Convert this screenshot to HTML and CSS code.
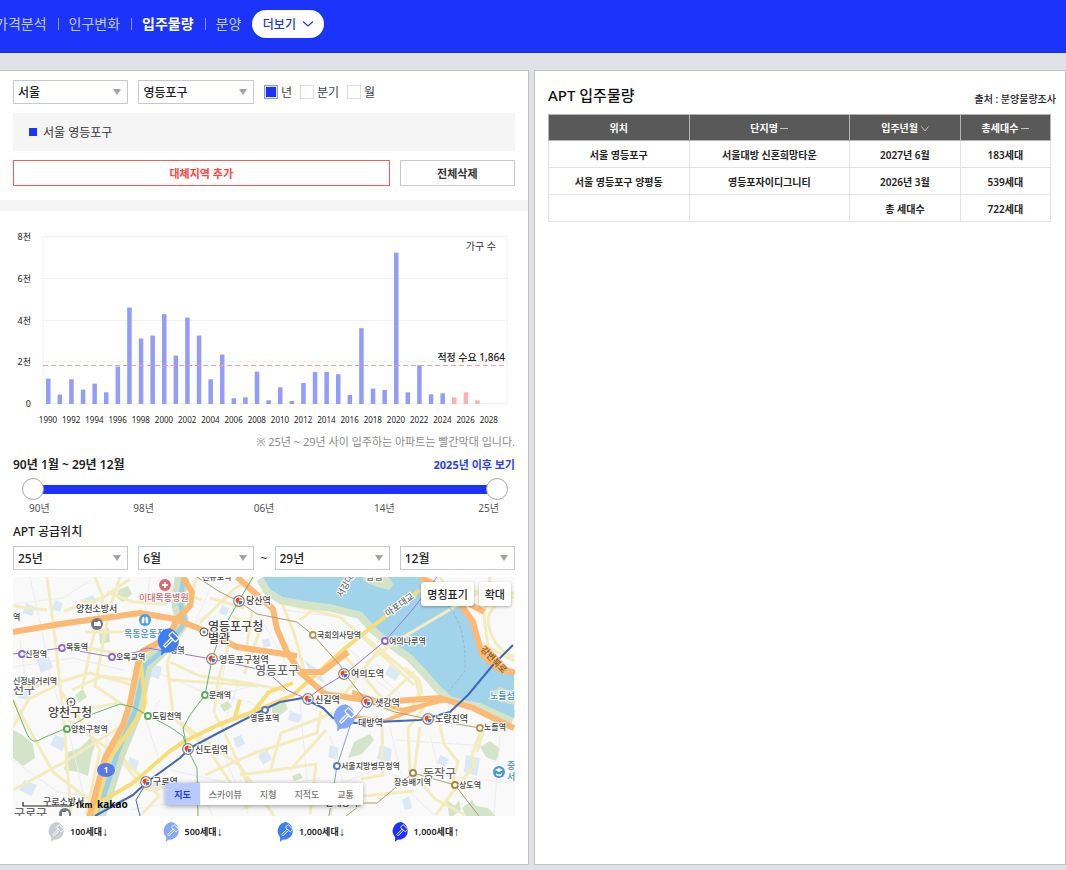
FILE: index.html
```html
<!DOCTYPE html>
<html lang="ko">
<head>
  <meta charset="UTF-8" />
  <meta name="viewport" content="width=device-width, initial-scale=1.0"/>
  <title>입주물량</title>
  <link rel="stylesheet" href="styles.css">
</head>
<body>
  <svg class="defs" aria-hidden="true">
    <symbol id="pin" viewBox="0 0 20 22">
      <path d="M10 0a10 10 0 0 1 0 19.4q-2 0-4 .2L3.200 22l.4-5A10 10 0 0 1 10 0z" fill="currentColor"/>
      <g fill="none" stroke="#fff" stroke-width="1" transform="rotate(45 10 10)">
        <rect x="6.500" y="3.200" width="7.500" height="4.200" rx=".6"/>
        <path d="M9.300 7.400h2v8.600h-2z"/>
      </g>
    </symbol>
    <symbol id="transfer" viewBox="0 0 12 12">
      <circle cx="6" cy="6" r="5.300" fill="#fff" stroke="#858585" stroke-width="1.200"/>
      <path d="M6 2.500a3.500 3.500 0 0 1 3.500 2L6 6z" fill="#e8a33c"/>
      <path d="M2.500 6A3.500 3.500 0 0 1 6 2.500V6z" fill="#e0483f"/>
      <path d="M2.500 6L5 9.400 6 6z" fill="#e0483f"/>
      <path d="M6 9.500A3.500 3.500 0 0 0 9.500 6H6z" fill="#3f74d8"/>
    </symbol>
  </svg>

  <header class="topbar">
    <nav class="menu">
      <a href="#">가격분석</a>
      <a href="#">인구변화</a>
      <a href="#" class="active">입주물량</a>
      <a href="#">분양</a>
    </nav>
    <button type="button" class="more">더보기
      <svg width="12" height="8" viewBox="0 0 12 8"><path d="M1 1.500l5 4.500 5-4.500" fill="none" stroke="currentColor" stroke-width="1.200"/></svg>
    </button>
  </header>

  <main class="panels">
    <section class="panel panel-left">
      <div class="filters">
        <div class="row">
          <select class="region" aria-label="시도"><option>서울</option></select>
          <select class="region" aria-label="시군구"><option>영등포구</option></select>
          <div class="checks">
            <label><input type="checkbox" checked>년</label>
            <label><input type="checkbox">분기</label>
            <label><input type="checkbox">월</label>
          </div>
        </div>
        <div class="selected">서울 영등포구</div>
        <div class="row">
          <button type="button" class="btn-add">대체지역 추가</button>
          <button type="button" class="btn-clear">전체삭제</button>
        </div>
      </div>

      <div class="supply">
        <svg class="chart" viewBox="0 0 502 200" role="img" aria-label="연도별 입주물량">
          <g id="grid"></g>
          <g id="bars"></g>
          <line class="demand" x1="30" y1="139.500" x2="494" y2="139.500"/>
          <text class="unit" x="483" y="24">가구 수</text>
          <text class="demand-label" x="492" y="135">적정 수요 1,864</text>
          <g id="years"></g>
        </svg>
        <p class="note">※ 25년 ~ 29년 사이 입주하는 아파트는 빨간막대 입니다.</p>
        <div class="period">
          <strong>90년 1월 ~ 29년 12월</strong>
          <a href="#">2025년 이후 보기</a>
        </div>
        <div class="slider">
          <input type="range" min="1990" max="2025" value="1990" aria-label="시작 연도">
          <input type="range" min="1990" max="2025" value="2025" aria-label="종료 연도">
        </div>
        <div class="ticks"><span>90년</span><span>98년</span><span>06년</span><span>14년</span><span>25년</span></div>

        <h2>APT 공급위치</h2>
        <div class="range">
          <select aria-label="시작 년"><option>25년</option></select>
          <select aria-label="시작 월"><option>6월</option></select>
          <span>~</span>
          <select aria-label="종료 년"><option>29년</option></select>
          <select aria-label="종료 월"><option>12월</option></select>
        </div>

        <div class="map">
          <svg viewBox="13 577 502 239">
            <rect x="13" y="577" width="502" height="239" fill="#f9f9f9"/>

            <!-- parks and blocks -->
            <g fill="#d3e4c8">
              <path d="M118 590l10-4 4 8-9 8-6-4zM99 630l10-2 1 14-10 2zM13 730l8 4 12 10 2 14-12 8-10-8zM68 752l12-4 10-10 6 4-4 12-4 22-10-4-14-2zM75 695l8-6 4 8-8 6zM272 702l12-3 4 10-10 8-6-4zM354 742l16-8 4 6-12 14-14 4zM480 747l10-6 10 8-4 12-10-4zM462 808l10-8 4 6 12 2 8 8h-30zM292 776l8-3 3 5-9 3zM447 800l8 6 4-6 2 10-8 6h-4zM220 705l8-4 4 6-8 5z"/>
            </g>
            <g fill="#dbe9f5">
              <path d="M26 603l10 4-4 9-9-3zM83 599l10-4 4 8-10 5zM36 660l12-5 5 12-12 6zM150 664l12 3-3 12-11-3zM20 688l11 3-3 9-10-2zM55 735l12 4-5 12-12-6zM24 780l13 5-6 11-12-6zM130 757l9 4-3 10-10-4zM233 738l8-3 4 9-8 4zM258 755l9-5 5 9-9 6zM304 660l14 10 7 13-12-6zM290 711l12 4-3 8-11-3zM380 745l12 4-2 14-13-4zM402 800l7-4 3 12-7 2zM440 755l9 4-4 8-8-4zM390 665l12 6-7 10-10-7zM466 755l14 3-3 18-13-4zM222 605l7 3-3 8-7-3zM262 640l7-2 2 8-8 2zM330 745l9 3-2 12-9-3zM55 600l8 3-3 9-8-3zM495 590l10 3-2 9-11-3zM150 785l9-5 4 8-8 5z"/>
            </g>

            <!-- minor streets -->
            <g class="street minor">
              <path d="M13 604l50-6 28-18M30 577l12 54 8 45 20 60 18 78M13 667l60-9 50 12M13 760l45 32 50 8M150 577l-5 34M195 690l55 12 26 20M170 770l90 20 60-12M230 640l-10 50M215 577l-20 46M250 600l40 70M300 700l10 115M330 735l22 80M390 727l14 60 30 28M430 735l10 40 70 8M500 735l-6 80M350 650l50 44M370 632l35 26M240 680l-22 60 30 74M160 700l-14 20 20 60M20 640l8 60-15 20M110 720l-8 50M285 610l60 8M255 577l-60 46M440 577l10 14 64 4M490 577l6 40M150 670l50 20M325 790l50-20 36 10M200 700l60-16M200 790l12 25M240 810l80-30M395 740l90 6M375 680l25 18M130 810l60-10"/>
            </g>
            <g class="street">
              <path d="M47 577l6 44 10 90 8 104M13 690l50-9 27-8 50 14M64 611l40-14 26-18M95 577l8 20-12 50-9 42M107 592l26 10 34 2M120 577l-11 34-14 75 33 22M80 600l34 16M85 632h50M88 648l44 8M72 690l30-14 33 4M13 727l16-28 32-16M13 700l40 72 52 40M13 790l50-27 60-38M68 720l50 36 22 28M80 711l38-8M115 750l44 46-18 19M140 790l60-7M60 690l40 60-14 65M13 606l34 4"/>
              <path d="M197 577l-16 50-14 36 6 50M170 662l30 14 40 6 45 8M170 680l88 6M200 623l34-34 20-12M180 722l60 44 34 50M205 775l50-22 62-20 4-22M215 715l6 10 30 66M170 715l38 34 40 60M230 640l-12 40-4 34M252 612l-8 52M232 616l28 14-16 44M210 598l34 10M270 772l11-39 52-20M240 775l76-11-6 50M290 770l36-40M300 620l28-22 56 20M170 590l32 10"/>
              <path d="M282 603l12 30 10 36M286 604l54 13 40 36 34 32M340 652l20 20 40 48M380 648l-38 50M414 672l-36 34M420 700l-4-20-52-44M395 640l88-52M405 668l14 12 3 12-10 14"/>
              <path d="M420 727l-6 46M440 724l4 20 14 18-6 24M482 728l-10 26 2 12-20 24-18 25M413 773l22 26 30 16M382 725l1 50-22 4M430 700l-22 28 2 44M485 726l-8 26M330 815l4-16 80-8"/>
            </g>

            <!-- Han river, islet banks and the stream -->
            <path d="M263 577l7 12 13 8 22 4 25 3 32 8 13 15 17 14 20 14 16 17 12 14 12 11 28 6 34 15" fill="none" stroke="#d3e4c8" stroke-width="15"/>
            <path d="M263 577l7 12 13 8 22 4 25 3 32 8 13 15 17 14 20 14 16 17 12 14 12 11 28 6 34 15V577z" fill="#a1d3ea"/>
            <path d="M362 577h26l6 7-5 6-12-3-12-5z" fill="#d3e4c8"/>
            <path d="M424 577l24 13 14 16 11 16 5 18 4 15 13 13 20 6v-97z" fill="#f9f9f9"/>
            <path d="M440 577l8 13 66 3M490 577l-6 40 4 30 26 14M514 597q-30 8-25 30t25 30" class="street"/>
            <path d="M490 693l10-6 15 6v12l-15-3z" fill="#d3e4c8"/>
            <path d="M182 577l-4 24 4 22-22 28-14 14-10 46-18 44-12 40-8 22" fill="none" stroke="#cfe2c6" stroke-width="14"/>
            <path d="M184 577l-4 24 5 22-22 28-18 14-10 46-17 40-14 44-10 22" fill="none" stroke="#9dcfe2" stroke-width="5"/>
            <path d="M483 590l-88 52-30 22" fill="none" stroke="#f5edc0" stroke-width="3"/>
            <path d="M443 601q24 20 22 70l-16 20" fill="none" stroke="#9ab5c4" stroke-width="1" stroke-dasharray="3 2"/>

            <!-- arterials -->
            <g class="trunk yellow">
              <path d="M90 808l43-25 37-32 15-10 35-17 33-12 40-17 50-45 30-24 47-36"/>
              <path d="M140 655l5 47-2 8-26 38-10 14-12 54M253 712l16-20 24-9"/>
              <path d="M240 700l-6 20"/>
            </g>
            <g class="trunk">
              <path d="M13 632l47-8 80-11 35 6 28 11 34 17 40 6 20 3"/>
              <path d="M237 577l20 18 16 14 4 20 10 23 13 20 25 22 55 8 60-4 33 10 41 20"/>
              <path d="M183 577l9 15-2 14-13 13-8 18-26 14-5 12-8 40-7 22-18 33-8 30-8 30"/>
              <path d="M420 577l28 14 14 15 11 16 5 18 4 14 13 13 20 6M448 592l36 20"/>
              <path d="M300 672h22l26-20"/>
            </g>
            <path d="M340 715l45 6 50-20M352 692l50 18 44-10" class="trunk thin"/>

            <!-- subway lines -->
            <g class="rail">
              <path stroke="#4467b8" d="M95 816l38-21 14-13 33-24 10-10 30-16 43-22 17-8 23-4 20 10 10 10 22 5 65-3 30-8 18-17 25-30 20-20"/>
              <path stroke="#4467b8" d="M140 816l-4-16 11-18"/>
              <path stroke="#6ab36a" d="M253 577l-13 22-13 23-7 13-8 24-7 36-15 20-7 13 4 20 10 20 1 48M187 748l-4-12-13-9-23-12-14-8-13-3-30 11-23 13-24 10q-11 8-16-4l-14-34"/>
              <path stroke="#9a78cc" d="M13 654l9-1 40-5 50 9 25-5 10-4 36 6 29 5 41 9 20 9 14 13 20 9 13-10 25-15 40-33 28-32 24-32"/>
              <path stroke="#b39d68" d="M197 577l23 15 18 9 19 13 40 8 16 13 27 30 5 9 22 28 28 10 33 7 52 9M346 816l17-13h14l36-30 42 12 24 31"/>
              <path stroke="#8f9cb4" d="M367 702l-16 21-14 43-8 50"/>
            </g>

            <g class="stops">
              <circle cx="22" cy="654" r="3" stroke="#8f68c8"/>
              <circle cx="62" cy="648" r="3" stroke="#8f68c8"/>
              <circle cx="112" cy="657" r="3" stroke="#8f68c8"/>
              <circle cx="385" cy="641" r="3" stroke="#8f68c8"/>
              <circle cx="67" cy="729" r="3" stroke="#5aab5a"/>
              <circle cx="148" cy="716" r="3" stroke="#5aab5a"/>
              <circle cx="205" cy="695" r="3" stroke="#5aab5a"/>
              <circle cx="265" cy="710" r="3" stroke="#5b79bd"/>
              <circle cx="337" cy="766" r="3" stroke="#5b79bd"/>
              <circle cx="313" cy="635" r="3" stroke="#b09a50"/>
              <circle cx="480" cy="728" r="3" stroke="#b09a50"/>
              <circle cx="413" cy="773" r="3" stroke="#a08a3c"/>
              <circle cx="455" cy="785" r="3" stroke="#a08a3c"/>
            </g>
            <g class="offices">
              <circle cx="204" cy="632" r="4"/>
              <circle cx="204" cy="632" r="1"/>
              <circle cx="71" cy="702" r="4"/>
              <circle cx="71" cy="702" r="1"/>
            </g>
            <use href="#transfer" x="233" y="595" width="12" height="12"/>
            <use href="#transfer" x="206" y="653" width="12" height="12"/>
            <use href="#transfer" x="302" y="693" width="12" height="12"/>
            <use href="#transfer" x="338" y="668" width="12" height="12"/>
            <use href="#transfer" x="361" y="696" width="12" height="12"/>
            <use href="#transfer" x="422" y="713" width="12" height="12"/>
            <use href="#transfer" x="182" y="743" width="12" height="12"/>
            <use href="#transfer" x="140" y="776" width="12" height="12"/>

            <!-- places -->
            <circle cx="165" cy="585" r="6" fill="#e0696f"/>
            <path d="M165 582v6M162 585h6" stroke="#fff" stroke-width="2"/>
            <circle cx="145" cy="620" r="6" fill="#4a9ae0"/>
            <path d="M142 623v-4l1-2h1v6zM148 623v-4l-1-2h-1v6zM144 619h2" fill="#fff" stroke="#fff" stroke-width=".6"/>
            <circle cx="97" cy="624" r="6" fill="#6f7884"/>
            <path d="M94 622h4v-1h2l1 3v2h-7z" fill="#fff"/>
            <circle cx="65" cy="814" r="6" fill="#6f7884"/>
            <path d="M62 812h4v-1h2l1 3v2h-7z" fill="#fff"/>
            <circle cx="499" cy="772" r="6" fill="#4a9ad8"/>
            <path d="M495 770l4-2 4 2-4 2zM496 773q3 3 6 0v2q-3 2-6 0z" fill="#fff"/>
            <ellipse cx="106" cy="770" rx="9" ry="7" fill="#5878e8"/>
            <text x="106" y="773" text-anchor="middle" class="route">1</text>

            <g class="names">
              <text x="13" y="620">역</text>
              <text x="76" y="612" class="mid">양천소방서</text>
              <text x="25" y="657">신정역</text>
              <text x="66" y="650">목동역</text>
              <text x="116" y="660">오목교역</text>
              <text x="13" y="694" class="big gu">천구</text>
              <text x="13" y="684">신정네거리역</text>
              <text x="170" y="653">평역</text>
              <text x="48" y="717" class="big">양천구청</text>
              <text x="71" y="732">양천구청역</text>
              <text x="152" y="719">도림천역</text>
              <text x="209" y="698">문래역</text>
              <text x="246" y="604" class="mid">당산역</text>
              <text x="208" y="631" class="big">영등포구청</text>
              <text x="208" y="643" class="big">별관</text>
              <text x="219" y="663" class="mid">영등포구청역</text>
              <text x="255" y="675" class="big gu">영등포구</text>
              <text x="202" y="580">선유도역</text>
              <text x="317" y="638">국회의사당역</text>
              <text x="389" y="644">여의나루역</text>
              <text x="351" y="677" class="mid">여의도역</text>
              <text x="315" y="703" class="mid">신길역</text>
              <text x="375" y="706" class="mid">샛강역</text>
              <text x="358" y="726" class="mid">대방역</text>
              <text x="435" y="722" class="mid">노량진역</text>
              <text x="484" y="730">노들역</text>
              <text x="250" y="721">영등포역</text>
              <text x="195" y="753" class="mid">신도림역</text>
              <text x="153" y="785" class="mid">구로역</text>
              <text x="341" y="769">서울지방병무청역</text>
              <text x="423" y="778" class="big gu">동작구</text>
              <text x="394" y="785">장승배기역</text>
              <text x="459" y="788">상도역</text>
              <text x="43" y="805" class="mid">구로소방서</text>
              <text x="14" y="818" class="big gu">구로구</text>
              <text x="325" y="806" class="mid">신대방역</text>
              <text x="139" y="601" class="mid hospital">이대목동병원</text>
              <text x="124" y="637" class="mid stadium">목동운동장</text>
              <text x="490" y="699" class="mid stadium">노들섬</text>
              <text x="507" y="769" class="mid stadium">중</text>
              <text x="507" y="780" class="mid stadium">서</text>
              <text transform="translate(388 617) rotate(-36)" class="mid gu">마포대교</text>
              <text transform="translate(342 598) rotate(-62)" class="mid gu">서강대교</text>
              <text transform="translate(480 650) rotate(46)" class="mid riverside">강변북로</text>
              <text x="366" y="580" class="mid gu">밤섬</text>
            </g>

            <use href="#pin" x="157" y="628" width="25" height="28" color="#3f7df5"/>
            <use href="#pin" x="333" y="704" width="25" height="28" color="#82a8fa"/>

            <path d="M23 802v4h48v-4" fill="none" stroke="#222" stroke-width="1.200"/>
            <text x="75" y="808" class="scale">1km</text>
            <text x="97" y="808" class="brand">kakao</text>
          </svg>
          <div class="map-tools">
            <button type="button">명칭표기</button>
            <button type="button">확대</button>
          </div>
          <div class="map-types">
            <button type="button" class="on">지도</button>
            <button type="button">스카이뷰</button>
            <button type="button">지형</button>
            <button type="button">지적도</button>
            <button type="button">교통</button>
          </div>
        </div>

        <ul class="legend">
          <li><svg class="c1"><use href="#pin"/></svg>100세대<span>↓</span></li>
          <li><svg class="c2"><use href="#pin"/></svg>500세대<span>↓</span></li>
          <li><svg class="c3"><use href="#pin"/></svg>1,000세대<span>↓</span></li>
          <li><svg class="c4"><use href="#pin"/></svg>1,000세대<span>↑</span></li>
        </ul>
      </div>
    </section>

    <section class="panel panel-right">
      <div class="title">
        <h1>APT 입주물량</h1>
        <p>출처 : 분양물량조사</p>
      </div>
      <table>
        <thead>
          <tr>
            <th class="w-loc">위치</th>
            <th class="w-name">단지명 <svg width="8" height="6" viewBox="0 0 8 6"><path d="M0 2.500h8"/></svg></th>
            <th class="w-date">입주년월 <svg width="8" height="6" viewBox="0 0 8 6"><path d="M.5.500L4 5 7.500.500"/></svg></th>
            <th class="w-num">총세대수 <svg width="8" height="6" viewBox="0 0 8 6"><path d="M0 2.500h8"/></svg></th>
          </tr>
        </thead>
        <tbody>
          <tr><td>서울 영등포구</td><td>서울대방 신혼희망타운</td><td>2027년 6월</td><td>183세대</td></tr>
          <tr><td>서울 영등포구 양평동</td><td>영등포자이디그니티</td><td>2026년 3월</td><td>539세대</td></tr>
          <tr><td></td><td></td><td>총 세대수</td><td>722세대</td></tr>
        </tbody>
      </table>
    </section>
  </main>

  <script>
    // households moving in per year, from 1990
    const supply = [1216, 448, 1184, 688, 976, 560, 1792, 4624, 3136, 3280,
      4304, 2320, 4144, 3280, 1184, 2368, 272, 320, 1552, 176,
      800, 144, 1008, 1536, 1536, 1424, 432, 3632, 736, 672,
      7248, 560, 1856, 464, 512, 320, 560, 176];
    const left = 30, right = 494, top0 = 11, base = 178;
    const step = (right - left) / 40;

    let grid = '', bars = '', years = '';
    ['8천', '6천', '4천', '2천', '0'].forEach((label, i) => {
      const y = Math.round(top0 + i * (base - top0) / 4) - 0.5;
      grid += `<line x1="${left}" y1="${y}" x2="${right}" y2="${y}"/>`;
      grid += `<text x="18" y="${y + 3}">${label}</text>`;
    });
    grid += `<line x1="${left}" y1="${top0}" x2="${left}" y2="${base}"/>`;
    grid += `<line x1="${right}" y1="${top0}" x2="${right}" y2="${base}"/>`;

    supply.forEach((value, i) => {
      const h = value / 8000 * (base - top0);
      const x = left + step * i + 3;
      bars += `<rect x="${x}" y="${base - h}" width="4.5" height="${h}" class="${i >= 35 ? 'planned' : ''}"/>`;
    });
    for (let i = 0; i < 40; i += 2) {
      years += `<text x="${left + step * i + 5}" y="197">${1990 + i}</text>`;
    }
    document.getElementById('grid').innerHTML = grid;
    document.getElementById('bars').innerHTML = bars;
    document.getElementById('years').innerHTML = years;
  </script>
</body>
</html>
```

FILE: styles.css
```css
* { box-sizing: border-box; }

body {
  margin: 0;
  min-height: 100vh;
  display: flex;
  flex-direction: column;
  font-family: "Noto Sans", "Noto Sans CJK KR", sans-serif;
  font-size: 12px;
  color: #222;
  background: #e0e1e6;
}

h1, h2, p, ul { margin: 0; padding: 0; }
button, select { font-family: inherit; cursor: pointer; }
a { text-decoration: none; }
.defs { display: none; }

/* header */
.topbar {
  display: flex;
  align-items: center;
  height: 53px;
  padding-bottom: 4px;
  background: #1b33fb;
  border-bottom: 1px solid #1a2ecb;
}

.menu { display: flex; align-items: center; margin-left: -5px; }
.menu a { display: flex; align-items: center; font-size: 14px; line-height: 20px; color: #c2c8ff; }
.menu a + a::before {
  content: "";
  width: 1px;
  height: 12px;
  margin: 0 10px 0 11px;
  background: #8f9bff;
}
.menu a.active { color: #fff; font-weight: bold; }

.more {
  display: flex;
  align-items: center;
  justify-content: center;
  gap: 6px;
  width: 72px;
  height: 28px;
  margin-left: 11px;
  padding: 0;
  border: none;
  border-radius: 14px;
  background: #fff;
  color: #1b33fb;
  font-size: 12px;
  font-weight: 500;
}

/* panels */
.panels {
  flex: 1;
  display: grid;
  grid-template-columns: 529fr 532fr;
  gap: 5px;
  padding: 17px 0 5px;
}
.panel { background: #fff; border: 1px solid #bfc0c6; min-width: 0; }
.panel-left { border-left: none; }
.panel-right { padding: 13px 9px 14px 13px; }

.filters {
  display: flex;
  flex-direction: column;
  gap: 9px;
  padding: 9px 13px 14px;
  border-bottom: 11px solid #f5f5f5;
}
.row { display: flex; gap: 10px; }

select {
  appearance: none;
  flex: 1;
  min-width: 0;
  height: 24px;
  padding: 0 4px;
  border: 1px solid #c5c9d4;
  border-radius: 0;
  background: #fff url("data:image/svg+xml,%3Csvg xmlns='http://www.w3.org/2000/svg' width='8' height='6'%3E%3Cpath d='M0 0h8L4 6z' fill='%23a3a3a3'/%3E%3C/svg%3E") no-repeat right 6px center;
  color: #222;
  font-size: 12px;
  font-weight: 500;
}
.region { flex: 0 0 23%; }

.checks { display: flex; align-items: center; gap: 8px; }
.checks label { display: flex; align-items: center; gap: 3px; color: #444; }
.checks input {
  appearance: none;
  width: 14px;
  height: 14px;
  margin: 0;
  border: 1px solid #dcdde2;
  background: #fff;
}
.checks input:checked {
  border-color: #8d99fb;
  background: #1b33fb;
  box-shadow: inset 0 0 0 1px #dfe2ff;
}

.selected {
  display: flex;
  align-items: center;
  gap: 6px;
  height: 38px;
  padding-left: 16px;
  background: #f5f5f5;
  color: #333;
}
.selected::before { content: ""; width: 8px; height: 8px; background: #1b33fb; }

.btn-add, .btn-clear {
  height: 26px;
  padding: 0;
  background: #fff;
  font-size: 11px;
  font-weight: bold;
}
.btn-add { flex: 1; border: 1px solid #ff5a55; color: #ff4540; }
.btn-clear { flex: 0 0 23%; border: 1px solid #c8c9cc; color: #333; }

/* chart */
.supply { padding: 15px 13px 0; }
.chart { display: block; width: 100%; }
#grid line { stroke: #f1f1f1; stroke-width: 1; }
#grid text { font-size: 9px; text-anchor: end; fill: #222; }
#years text { font-size: 8px; text-anchor: middle; fill: #222; }
#bars rect { fill: #929cfb; }
#bars .planned { fill: #fbb1b1; }
.demand { stroke: #f79a9a; stroke-width: 1; stroke-dasharray: 5 3; }
.unit, .demand-label { font-size: 10px; text-anchor: end; fill: #333; }
.demand-label { font-weight: 500; fill: #222; }

.note { margin-top: 7px; line-height: 18px; font-size: 11px; text-align: right; color: #8c8c8c; }

.period {
  display: flex;
  align-items: center;
  justify-content: space-between;
  margin-top: 5px;
  line-height: 18px;
}
.period strong { font-weight: 600; }
.period a { font-size: 11px; font-weight: bold; color: #2b40fb; }

.slider {
  display: grid;
  height: 22px;
  margin: 4px 7px 0 9px;
  background: linear-gradient(#1b33fb, #1b33fb) no-repeat center / calc(100% - 20px) 9px;
}
.slider input {
  grid-area: 1 / 1;
  appearance: none;
  width: 100%;
  height: 22px;
  margin: 0;
  background: none;
  pointer-events: none;
}
.slider input::-webkit-slider-thumb {
  appearance: none;
  width: 22px;
  height: 22px;
  border: 1px solid #a9a9a9;
  border-radius: 50%;
  background: #fff;
  pointer-events: auto;
}

.ticks {
  display: grid;
  grid-template-columns: 104fr 120fr 120fr 104fr auto;
  margin: 0 16px 0 16px;
  font-size: 10px;
  line-height: 16px;
  color: #555;
}

.supply h2 { margin-top: 7px; font-size: 12px; font-weight: 500; line-height: 18px; }

.range { display: flex; align-items: center; gap: 10px; margin-top: 5px; }
.range span { width: 21px; margin: 0 -10px; text-align: center; }

/* map */
.map { position: relative; margin-top: 7px; overflow: hidden; }
.map > svg { display: block; width: 100%; }
.street { fill: none; stroke: #f3ecbf; stroke-width: 3; stroke-linejoin: round; }
.street.minor { stroke: #ececec; stroke-width: 1; }
.trunk { fill: none; stroke: #fbb974; stroke-width: 6; stroke-linejoin: round; }
.trunk.yellow { stroke: #f7dc78; stroke-width: 4; }
.trunk.thin { stroke-width: 4; }
.rail { fill: none; stroke-width: 1; stroke-linejoin: round; }
.rail path:first-child { stroke-width: 2; }
.stops { fill: #fff; stroke-width: 2; }
.offices { fill: #fff; stroke: #555; stroke-width: 1; }
.names text {
  font-size: 8px;
  font-weight: 500;
  fill: #444;
  stroke: #fff;
  stroke-width: 2px;
  paint-order: stroke;
}
.names .mid { font-size: 9px; }
.names .big { font-size: 12px; }
.names .gu { fill: #6a6a6a; }
.names .hospital { fill: #d9666c; }
.names .stadium { fill: #3d8cd0; }
.names .riverside { fill: #8a5a1c; stroke: #fbb974; }
.route { font-size: 8px; font-weight: bold; fill: #fff; }
.scale { font-size: 8px; font-weight: bold; }
.brand { font-size: 10px; font-weight: bold; }

.map-tools { position: absolute; top: 5px; right: 4px; display: flex; gap: 5px; }
.map-tools button {
  height: 24px;
  padding: 0 6px;
  border: none;
  border-radius: 3px;
  background: #fff;
  box-shadow: 0 1px 3px rgba(0, 0, 0, 0.3);
  color: #222;
  font-size: 11px;
  font-weight: 500;
}

.map-types {
  position: absolute;
  bottom: 11px;
  left: 50%;
  transform: translateX(-50%);
  display: flex;
  background: #fff;
  box-shadow: 0 1px 5px rgba(0, 0, 0, 0.4);
}
.map-types button {
  height: 22px;
  padding: 0 9px;
  border: none;
  background: none;
  color: #777;
  font-size: 9px;
  font-weight: 500;
  white-space: nowrap;
}
.map-types .on { background: #b9caff; color: #2236f0; font-weight: bold; }

.legend {
  display: grid;
  grid-template-columns: repeat(4, 1fr);
  padding: 6px 9px 0 35px;
  list-style: none;
}
.legend li { display: flex; align-items: center; font-size: 9px; font-weight: 600; line-height: 20px; white-space: nowrap; }
.legend svg { width: 18px; height: 20px; margin-right: 4px; }
.legend span { font-family: "Liberation Sans", sans-serif; font-size: 12px; font-weight: normal; }
.c1 { color: #c6ccd6; }
.c2 { color: #86aafa; }
.c3 { color: #3f7df5; }
.c4 { color: #1b33fb; }

/* table */
.title { display: flex; align-items: flex-end; justify-content: space-between; }
h1 { font-size: 15px; font-weight: 500; line-height: 22px; color: #111; }
.title p { font-size: 10px; font-weight: 500; line-height: 14px; }

table {
  width: calc(100% - 5px);
  margin-top: 8px;
  border-collapse: collapse;
  table-layout: fixed;
  font-size: 10px;
}
th, td { height: 27px; padding: 0; border: 1px solid #e3e3e3; text-align: center; }
th { height: 26px; background: #595959; border-color: #b5b5b5; color: #fff; font-weight: bold; }
td { font-weight: 600; color: #222; }
th svg { fill: none; stroke: #c4c4c4; stroke-width: 1; }
.w-loc { width: 28%; }
.w-name { width: 32%; }
.w-date { width: 22%; }
.w-num { width: 18%; }
```
